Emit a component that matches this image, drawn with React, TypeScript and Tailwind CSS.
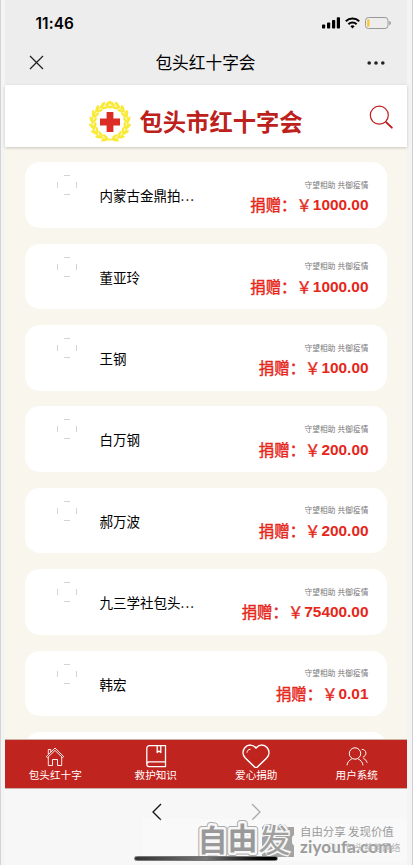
import React from "react";

const donations = [
  { name: "内蒙古金鼎拍", more: true, amount: "1000.00" },
  { name: "董亚玲", more: false, amount: "1000.00" },
  { name: "王钢", more: false, amount: "100.00" },
  { name: "白万钢", more: false, amount: "200.00" },
  { name: "郝万波", more: false, amount: "200.00" },
  { name: "九三学社包头", more: true, amount: "75400.00" },
  { name: "韩宏", more: false, amount: "0.01" },
];

const leafAngles = [10, 30, 50, 70, 90, 110, 130, 150, 168];

function StatusBar() {
  return (
    <div className="flex h-[46px] items-center justify-between pl-[30.5px] pr-[16px]">
      <span className="mt-px font-['Inter','Liberation_Sans',sans-serif] text-[15.4px] font-semibold leading-5 tracking-[0.1px] text-black">11:46</span>
      <svg className="h-[14px] w-[70px]" viewBox="0 0 70 14">
        <g fill="#000">
          <rect x="1" y="8.5" width="3.2" height="4" rx=".8" />
          <rect x="6" y="6.5" width="3.2" height="6" rx=".8" />
          <rect x="11" y="4" width="3.2" height="8.5" rx=".8" />
          <rect x="15.8" y="1.3" width="3.2" height="11.2" rx=".8" />
        </g>
        <g fill="none" stroke="#000" strokeWidth="2">
          <path d="M24.8 5.3a9.6 9.6 0 0 1 13.4 0" />
          <path d="M27.4 8.2a5.8 5.8 0 0 1 8.2 0" />
        </g>
        <path d="M31.5 12.6l-2.1-2.3a3 3 0 0 1 4.2 0z" fill="#000" />
        <rect x="44.5" y="1.5" width="22.5" height="11" rx="3" fill="none" stroke="#999" />
        <path d="M68.4 5v4.2c1.8-.6 1.8-3.6 0-4.2z" fill="#888" />
        <rect x="46.2" y="3.2" width="2.2" height="7.6" rx=".8" fill="#fbc71e" />
      </svg>
    </div>
  );
}

function TitleBar() {
  return (
    <div className="grid h-[38.5px] grid-cols-[60px_1fr_60px] items-center pb-[5px]">
      <svg className="ml-6 h-[15px] w-[15px]" viewBox="0 0 15 15">
        <path d="M1 1l13 13M14 1L1 14" stroke="#222" strokeWidth="1.3" />
      </svg>
      <h1 className="-mt-px pr-px text-center text-[16.7px] leading-6 text-black">包头红十字会</h1>
      <svg className="ml-[20px] h-1 w-[18px]" viewBox="0 0 18 4" fill="#222">
        <circle cx="2.2" cy="2" r="1.8" />
        <circle cx="9" cy="2" r="1.8" />
        <circle cx="15.8" cy="2" r="1.8" />
      </svg>
    </div>
  );
}

function Wreath() {
  return (
    <svg className="h-[42px] w-[42px]" viewBox="-21 -21 42 42">
      {[1, -1].map((side) => (
        <g key={side} transform={`scale(${side} 1)`}>
          <path d="M-2 17.5A17.5 17.5 0 0 0 7-16" fill="none" stroke="#f9ee5a" strokeWidth="1.6" />
          {leafAngles.map((a) => (
            <g key={a} transform={`rotate(${-a}) translate(0 16.8)`} fill="#f9ea3a">
              <ellipse cx="2" cy="1.6" rx="3.8" ry="1.5" transform="rotate(24 2 1.6)" />
              <ellipse cx="2" cy="-1.7" rx="3.2" ry="1.3" transform="rotate(-28 2 -1.7)" />
            </g>
          ))}
        </g>
      ))}
      <path d="M-3.4-10h6.8v6.6H10v6.8H3.4V10h-6.8V3.4H-10v-6.8h6.6z" fill="#dc2d24" />
    </svg>
  );
}

function SiteHeader() {
  return (
    <header className="z-10 flex h-[62.5px] shrink-0 items-center bg-white pl-[84px] pr-[13px] shadow-[0_1px_3px_rgba(0,0,0,0.2)]">
      <div className="flex grow items-center gap-[8.5px] pt-[12px]">
        <Wreath />
        <span className="-mt-px whitespace-nowrap text-[23.3px] font-bold leading-8 text-[#bd211b]">包头市红十字会</span>
      </div>
      <svg className="mt-1 h-[25px] w-[25px]" viewBox="0 0 25 25" fill="none" stroke="#bd1f1b">
        <circle cx="10.3" cy="10.2" r="9" strokeWidth="1.2" />
        <path d="M16.6 16.6l1.3 1.2" strokeWidth="1.2" />
        <path d="M17.6 17.6l5.2 5" strokeWidth="2" strokeLinecap="round" />
      </svg>
    </header>
  );
}

function DonationCard({ name, more, amount }: { name: string; more: boolean; amount: string }) {
  return (
    <li className="flex h-[65.6px] shrink-0 rounded-[15px] bg-white pl-8 pr-[18.5px]">
      <svg className="mt-[13px] h-5 w-5" viewBox="0 0 20 20" stroke="#d4d4d4" strokeWidth="1">
        <path d="M7 .5h6M7 19.5h6M.5 7v6M19.5 7v6" />
      </svg>
      <span className="ml-[22.5px] mt-[23px] text-[13.5px] leading-5 text-black">
        {name}
        {more && <span className="tracking-[1.15px]">...</span>}
      </span>
      <div className="ml-auto flex flex-col items-end">
        <span className="mt-[16.5px] whitespace-pre text-[7.65px] leading-[11px] tracking-[0.13px] text-[#77777a]">守望相助 共御疫情</span>
        <span className="mt-[4.7px] flex whitespace-nowrap text-[15.4px] leading-5 text-[#e52619]">
          <span className="mr-[1px] [-webkit-text-stroke:0.4px_#e52619]">捐赠：￥</span>
          <span className="mt-px font-['Liberation_Sans',Arial,sans-serif] font-bold">{amount}</span>
        </span>
      </div>
    </li>
  );
}

const tabs = [
  {
    label: "包头红十字",
    icon: (
      <svg className="h-6 w-7" viewBox="0 0 28 24" fill="none" stroke="#fff" strokeWidth=".9" strokeLinejoin="round">
        <path d="M5.3 12.6L14 4l8.7 8.6-1.2 1L14 6.4l-7.5 7.2z" />
        <path d="M7.3 13v8.5h4.2v-6h5v6h4.2V13M7.3 10V5.5h2.5V8" />
      </svg>
    ),
  },
  {
    label: "救护知识",
    icon: (
      <svg className="h-6 w-7" viewBox="0 0 28 24" fill="none" stroke="#fff" strokeWidth="1.3" strokeLinejoin="round">
        <path d="M23.5 17.5V1.6H7.4a2.6 2.6 0 0 0-2.6 2.6V20M23.5 17.8H7.2a2.4 2.4 0 0 0 0 4.8h16.3zM15.2 1.8v6.8l1.8-1.5 1.8 1.5V1.8" />
      </svg>
    ),
  },
  {
    label: "爱心捐助",
    icon: (
      <svg className="h-6 w-7" viewBox="0 0 28 24" fill="none" stroke="#fff" strokeWidth="1.5" strokeLinejoin="round">
        <path d="M14 4.2C11.3.1 5.8.3 3 3.6.3 6.8.5 11 3.3 14L12.6 23q1.4 1.2 2.8 0L24.7 14c2.8-3 3-7.2.3-10.4C22.2.3 16.7.1 14 4.2z" />
        <path d="M5 8.7c0-2 1.2-3.3 3.5-3.5" strokeWidth="1" />
      </svg>
    ),
  },
  {
    label: "用户系统",
    icon: (
      <svg className="h-6 w-7" viewBox="0 0 28 24" fill="none" stroke="#fff" strokeWidth="1">
        <circle cx="12" cy="9.5" r="5.7" />
        <path d="M4 21.3c.4-3 2-5 4.7-6.3M15.2 15c2.5 1 4.4 3.3 4.8 6.3M18.7 5.4c2.4-.2 4.2 1.4 4.2 3.8 0 1.9-1.2 3.3-3.1 4M20.4 14.6c2 .7 3.3 2.2 3.7 4.2" />
      </svg>
    ),
  },
];

function TabBar() {
  return (
    <nav className="grid h-[49.5px] shrink-0 grid-cols-4 border-y border-[#cbb0a5] bg-[#bf251e] pt-[4px]">
      {tabs.map((tab) => (
        <a key={tab.label} className="flex flex-col items-center text-white">
          {tab.icon}
          <span className="mt-[-1px] text-[10.6px] leading-4">{tab.label}</span>
        </a>
      ))}
    </nav>
  );
}

function Watermark() {
  return (
    <div className="absolute left-[137px] top-[30px] flex h-[42px] w-[265px] items-center bg-white/25 pl-[54px]">
      <svg className="h-[44px] w-[98px] shrink-0 overflow-visible" viewBox="0 0 98 44">
        <g fontFamily="'Noto Sans CJK SC',sans-serif" fontWeight="700" strokeLinejoin="round">
          <path d="M66 9l3-3h11l2 2 2-2h4l3 3h7v8l-2 2v6l2 3v11H66z" fill="#a4a4a4" />
          <text x="62.5" y="34" fontSize="32" stroke="#f7f7f7" strokeWidth="2" fill="#f7f7f7">发</text>
          <text x="62.5" y="34" fontSize="32" fontWeight="400" fill="#a0a0a0">发</text>
          <text x="1.5" y="32.5" fontSize="30" stroke="#aaa" strokeWidth="7" fill="#aaa">自</text>
          <text x="31.5" y="30.5" fontSize="30" stroke="#aaa" strokeWidth="7" fill="#aaa">由</text>
          <text x="1.5" y="32.5" fontSize="30" stroke="#f7f7f7" strokeWidth="5" fill="#f7f7f7">自</text>
          <text x="31.5" y="30.5" fontSize="30" stroke="#f7f7f7" strokeWidth="5" fill="#f7f7f7">由</text>
          <text x="1.5" y="32.5" fontSize="30" fill="#999">自</text>
          <text x="31.5" y="30.5" fontSize="30" fill="#999">由</text>
        </g>
      </svg>
      <div className="relative ml-[6px] text-[#9b9b9b]">
        <div className="whitespace-pre text-[11.4px] leading-[15px]">自由分享 发现价值</div>
        <div className="font-['Lato','Liberation_Sans',sans-serif] text-[17px] font-bold leading-[16px] tracking-[0.15px]">ziyoufa.com</div>
        <div className="absolute left-[27px] top-[16px] flex items-center gap-1 whitespace-nowrap text-[9.2px] leading-[14px] text-[#b4b4b4]">
          <span>◯_</span>
          <span>包头慈善网络</span>
        </div>
      </div>
    </div>
  );
}

function BrowserBar() {
  return (
    <footer className="relative flex h-[76.5px] shrink-0 flex-col bg-[#f7f7f7]">
      <div className="flex justify-between pl-[147px] pr-[146px] pt-[14.5px]">
        <svg className="h-[18px] w-[10px]" viewBox="0 0 10 18" fill="none" stroke="#111" strokeWidth="1.3">
          <path d="M9 1L1 9l8 8" />
        </svg>
        <svg className="h-[18px] w-[10px]" viewBox="0 0 10 18" fill="none" stroke="#aaa" strokeWidth="1.3">
          <path d="M1 1l8 8-8 8" />
        </svg>
      </div>
      <Watermark />
      <div className="relative mb-[4px] ml-[129px] mt-auto h-[5px] w-[144px] rounded-full border border-[#777] bg-gradient-to-r from-[#333] via-[#777] to-black" />
    </footer>
  );
}

export default function App() {
  return (
    <div className="flex h-[865px] w-[413px] flex-col overflow-hidden border-l border-r border-l-[#d4d4d4] border-r-[#cfcfcf] bg-[#f4f4f4] pl-[4px] pr-[5px] font-['Noto_Sans_CJK_SC',sans-serif]">
      <div className="shrink-0 bg-[#ededed]">
        <StatusBar />
        <TitleBar />
      </div>
      <SiteHeader />
      <main className="min-h-0 grow overflow-hidden bg-[#f9f6ed] px-5 pt-[15.3px]">
        <ul className="flex flex-col gap-[15.8px]">
          {donations.map((d) => (
            <DonationCard key={d.name} {...d} />
          ))}
          <li className="h-[66px] rounded-[15px] bg-white" />
        </ul>
      </main>
      <TabBar />
      <BrowserBar />
    </div>
  );
}
